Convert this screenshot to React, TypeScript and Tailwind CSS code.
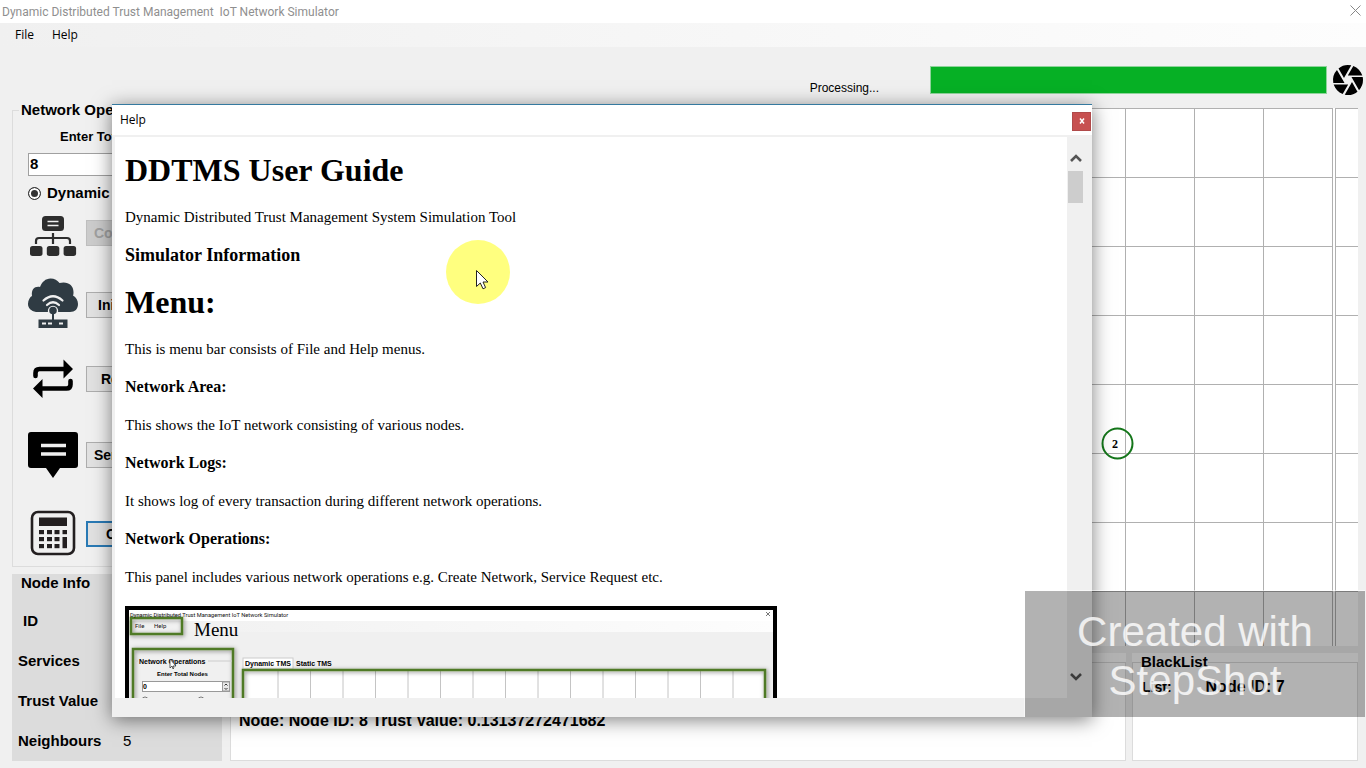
import React from "react";
import { MdCamera } from "react-icons/md";

const uiFont = "font-['Open_Sans','Noto_Sans',sans-serif]";

function NetworkIcon() {
  return (
    <svg width="50" height="50" viewBox="0 0 50 50" aria-hidden="true">
      <g fill="#2d2d2d">
        <rect x="14" y="8" width="22" height="15" rx="3.5" />
        <rect x="2" y="38" width="12.500" height="10" rx="2.500" />
        <rect x="18.800" y="38" width="12.500" height="10" rx="2.500" />
        <rect x="35.600" y="38" width="12.500" height="10" rx="2.500" />
      </g>
      <path d="M19.500 13.500h11M19.500 17.500h11" stroke="#f0f0f0" strokeWidth="1.500" />
      <path d="M8 36v-3q0-3 3-3h28q3 0 3 3v3M25 25v11" fill="none" stroke="#2d2d2d" strokeWidth="2.200" />
    </svg>
  );
}

function CloudIcon() {
  return (
    <svg width="50" height="50" viewBox="0 0 50 50" className="overflow-visible" aria-hidden="true">
      <path
        d="M8 32C3 31 0 28 0 24c0-4 2-7 4-8-1-7 3-10 8-9C14 2 17.500-1.500 22.500-1.500c4 0 7 2 9 4.500 8-2 14 2 14 9 0 1.500 0 2.500-.5 3.500C48 17 50 20.500 50 24c0 5-3 8-8 8Z"
        fill="#2f3b43"
      />
      <g fill="none" stroke="#f0f0f0" strokeWidth="2.200" strokeLinecap="round">
        <path d="M15.500 20.500Q25 12 34.500 20.500" />
        <path d="M19 25Q25 19.500 31 25" />
      </g>
      <circle cx="25" cy="31" r="5.200" fill="#f0f0f0" />
      <circle cx="25" cy="30.500" r="3.800" fill="#2f3b43" />
      <path d="M25 32v9" stroke="#2f3b43" strokeWidth="2" />
      <rect x="10.500" y="39.500" width="29" height="8.500" fill="#2f3b43" />
      <path d="M14 43.500h4M20 43.500h4M31 43.500h4" stroke="#f0f0f0" strokeWidth="2" />
    </svg>
  );
}

function RepeatIcon() {
  return (
    <svg width="50" height="50" viewBox="0 0 50 50" aria-hidden="true">
      <g fill="none" stroke="#000" strokeWidth="4.600" strokeLinecap="round">
        <path d="M7.500 22v-3q0-4 4-4H37" />
        <path d="M42.500 27v3.500q0 4-4 4H13" />
      </g>
      <path d="M35.500 5.500 45 15l-9.500 9.500ZM14.500 25 5 34.500l9.500 9.500Z" fill="#000" />
    </svg>
  );
}

function MessageIcon() {
  return (
    <svg width="50" height="50" viewBox="0 0 50 50" aria-hidden="true">
      <path d="M3 2h44q3 0 3 3v30q0 3-3 3H32l-7 10-7-10H3q-3 0-3-3V5q0-3 3-3Z" fill="#000" />
      <path d="M13 15.500h25M13 24h25" stroke="#f0f0f0" strokeWidth="3.600" />
    </svg>
  );
}

function CalculatorIcon() {
  return (
    <svg width="50" height="50" viewBox="0 0 50 50" aria-hidden="true">
      <rect x="4" y="3" width="42" height="42" rx="6" fill="none" stroke="#231f20" strokeWidth="2.600" />
      <g fill="#231f20">
        <rect x="11" y="8.500" width="28" height="8.500" />
        {[21, 28, 35].map((y) =>
          [11, 19, 26.5].map((x) => <rect key={`${x}-${y}`} x={x} y={y} width="5" height="4.200" />)
        )}
        <rect x="34.500" y="21" width="4.500" height="4.200" />
        <rect x="34.500" y="28" width="4.500" height="11.200" />
      </g>
    </svg>
  );
}

function Chevron({ up = false }: { up?: boolean }) {
  return (
    <svg width="12" height="10" viewBox="0 0 12 10" aria-hidden="true">
      <path d={up ? "M1 8 6 3l5 5" : "M1 2l5 5 5-5"} fill="none" stroke="#555" strokeWidth="2.600" />
    </svg>
  );
}

const plainButton = "border border-[#adadad] bg-[#e1e1e1]";

const operations = [
  { icon: <NetworkIcon />, label: "Configure", disabled: true, look: "border border-[#bfbfbf] bg-[#cccccc] pl-[7px] text-[#a0a0a0]" },
  { icon: <CloudIcon />, label: "Initialize", look: `${plainButton} pl-[11px]` },
  { icon: <RepeatIcon />, label: "Reset", look: `${plainButton} pl-[14px]` },
  { icon: <MessageIcon />, label: "Send", look: `${plainButton} pl-[7px]` },
  { icon: <CalculatorIcon />, label: "Calculate", look: "border-2 border-[#2a7ab5] bg-[#e1e1e1] pl-[18px]" },
];

function NetworkOperations() {
  return (
    <fieldset className="h-[465px] border border-[#dcdcdc]">
      <legend className="ml-[6px] px-[2px] text-[15px] leading-4 font-bold">Network Operations</legend>
      <div className="pt-[11px] pr-3 pl-[15px]">
        <label htmlFor="total" className="block pl-8 text-[13px] leading-4 font-bold">
          Enter Total Nodes
        </label>
        <input
          id="total"
          type="text"
          defaultValue="8"
          className="mt-2 block h-[23px] w-full border border-[#a0a0a0] bg-white px-[1px] pb-[3px] text-[15px] font-bold"
        />
        <label className="mt-2 flex h-[18px] items-center gap-[6px] text-[15px] font-bold">
          <input
            type="radio"
            name="mode"
            defaultChecked
            className="h-[13px] w-[13px] appearance-none rounded-full border border-[#333] bg-[#333] shadow-[inset_0_0_0_2px_#fff]"
          />
          Dynamic
        </label>
        <div className="mt-[6px] grid grid-rows-[72px_74px_76px_79px_50px]">
          {operations.map((op) => (
            <div key={op.label} className="flex h-[50px] items-center gap-2">
              {op.icon}
              <button
                type="button"
                disabled={op.disabled}
                className={`h-[26px] flex-1 text-left text-[14px] font-bold ${op.look}`}
              >
                {op.label}
              </button>
            </div>
          ))}
        </div>
      </div>
    </fieldset>
  );
}

const nodeInfo = [
  ["ID", ""],
  ["Services", ""],
  ["Trust Value", ""],
  ["Neighbours", "5"],
];

function NodeInfo() {
  return (
    <section className="mt-[7px] flex-1 bg-[#dcdcdc] text-[15px]">
      <h2 className="pl-[9px] leading-[18px] font-bold">Node Info</h2>
      <dl className="mt-[9px] pl-[6px]">
        {nodeInfo.map(([name, value]) => (
          <div key={name} className="grid h-10 grid-cols-[105px_1fr] items-center">
            <dt className={name === "ID" ? "pl-[5px] font-bold" : "font-bold"}>{name}</dt>
            <dd>{value}</dd>
          </div>
        ))}
      </dl>
    </section>
  );
}

function NetworkArea() {
  const lines =
    "bg-[linear-gradient(to_left,#b0b0b0_1px,transparent_1px),linear-gradient(to_bottom,#b0b0b0_1px,transparent_1px)] bg-[size:69px_69px]";
  return (
    <div className="flex flex-1 gap-[2px] bg-white">
      <div className={`relative flex-1 bg-right-top ${lines}`}>
        <svg className="absolute top-[318px] right-[199px]" width="34" height="34" viewBox="0 0 34 34">
          <circle cx="17.500" cy="17.500" r="15" fill="none" stroke="#14761a" strokeWidth="2" />
          <text x="12" y="22" fontFamily="Liberation Serif, serif" fontSize="12" fontWeight="bold">
            2
          </text>
        </svg>
      </div>
      <div className="w-[23px] border-l border-[#b0b0b0] bg-[linear-gradient(to_bottom,#b0b0b0_1px,transparent_1px)] bg-[size:69px_69px]" />
    </div>
  );
}

function GuidePicture() {
  const columns = Array.from({ length: 15 }, (_, i) => 153 + i * 32.5);
  return (
    <svg className="block shrink-0" width="652" height="420" viewBox="0 0 652 420" role="img" aria-label="Simulator window">
      <defs>
        <linearGradient id="bar">
          <stop offset="0" stopColor="#f0f0f0" />
          <stop offset="1" stopColor="#fdfdfd" />
        </linearGradient>
        <filter id="soft" x="-20%" y="-20%" width="140%" height="140%">
          <feDropShadow dx="1" dy="1" stdDeviation="2" floodColor="#000" floodOpacity="0.5" />
        </filter>
      </defs>
      <rect width="652" height="420" fill="#000" />
      <rect x="4" y="4" width="644" height="412" fill="#f0f0f0" />
      <rect x="4" y="4" width="644" height="11" fill="#fff" />
      <rect x="4" y="15" width="644" height="11" fill="url(#bar)" />
      <path d="M641 6l4 4M645 6l-4 4" stroke="#777" />
      <rect x="118" y="64" width="523" height="340" fill="#fff" />
      <path d={columns.map((x) => `M${x} 65v339`).join("")} stroke="#c4c4c4" />
      <rect x="118" y="52" width="50" height="11" fill="#fff" stroke="#ccc" />
      <g fill="none" stroke="#507a28" strokeWidth="2.500" filter="url(#soft)">
        <rect x="6" y="12" width="51" height="16" />
        <rect x="8" y="43" width="100" height="360" />
        <rect x="118" y="64" width="522" height="339" />
      </g>
      <path d="M10 55h3M83 55h24" stroke="#ccc" />
      <rect x="17.500" y="75.500" width="87" height="10" fill="#fff" stroke="#999" />
      <rect x="97.500" y="76" width="7" height="9" fill="#e8e8e8" stroke="#999" />
      <path d="M99.500 79.500 101 78l1.500 1.500M99.500 82l1.500 1.500 1.500-1.500" fill="none" stroke="#333" />
      <circle cx="20" cy="94" r="3" fill="#fff" stroke="#777" />
      <circle cx="76" cy="94" r="3" fill="#fff" stroke="#777" />
      <g fontFamily="Roboto, sans-serif" fontSize="6" fill="#111">
        <text x="5" y="11" fontSize="5.700">Dynamic Distributed Trust Management  IoT Network Simulator</text>
        <text x="10" y="22">File</text>
        <text x="29" y="22">Help</text>
      </g>
      <g fontFamily="Liberation Sans, sans-serif" fontSize="7" fontWeight="bold">
        <text x="14" y="58">Network Operations</text>
        <text x="32" y="70" fontSize="6">Enter Total Nodes</text>
        <text x="18" y="83">0</text>
        <text x="26" y="97">Dynamic</text>
        <text x="82" y="97">Static</text>
        <text x="120" y="60">Dynamic TMS</text>
        <text x="171" y="60">Static TMS</text>
      </g>
      <text x="69" y="30" fontFamily="Liberation Serif, serif" fontSize="19">Menu</text>
      <path d="M45 53v9l2-2 1 3 1-1-1-2h3Z" fill="#fff" stroke="#222" strokeWidth="0.700" />
    </svg>
  );
}

function HelpDialog() {
  return (
    <div
      role="dialog"
      aria-label="Help"
      className="absolute top-[104px] right-[274px] bottom-[51px] left-[112px] flex flex-col border-t border-[#35799f] bg-[#f0f0f0] shadow-[0_3px_18px_rgba(0,0,0,0.5)]"
    >
      <div className="flex h-[30px] shrink-0 items-center justify-between bg-white pr-[1px] pl-2">
        <span className={`text-[12px] ${uiFont}`}>Help</span>
        <button type="button" aria-label="Close help" className="mt-[2px] flex h-[19px] w-[19px] items-center justify-center border border-[#b04a4a] bg-[#c75050]">
          <svg width="6" height="6" viewBox="0 0 6 6" aria-hidden="true">
            <path d="M1 .5l4 5M5 .5l-4 5" stroke="#fff" strokeWidth="1.500" />
          </svg>
        </button>
      </div>
      <div className="mt-[2px] mb-[19px] ml-[3px] flex min-h-0 flex-1">
        <article className="relative flex min-w-0 flex-1 flex-col gap-5 overflow-hidden bg-white pt-[15px] pl-[10px] font-['Liberation_Serif',serif] text-[15px] leading-[18px]">
          <h1 className="text-[32px] leading-9 font-bold">DDTMS User Guide</h1>
          <p>Dynamic Distributed Trust Management System Simulation Tool</p>
          <h3 className="text-[18px] font-bold">Simulator Information</h3>
          <h1 className="text-[32px] leading-9 font-bold">Menu:</h1>
          <p>This is menu bar consists of File and Help menus.</p>
          <h4 className="text-[16px] font-bold">Network Area:</h4>
          <p>This shows the IoT network consisting of various nodes.</p>
          <h4 className="text-[16px] font-bold">Network Logs:</h4>
          <p>It shows log of every transaction during different network operations.</p>
          <h4 className="text-[16px] font-bold">Network Operations:</h4>
          <p>This panel includes various network operations e.g. Create Network, Service Request etc.</p>
          <GuidePicture />
          <svg className="absolute top-[103px] left-[331px]" width="64" height="64" viewBox="0 0 64 64" aria-hidden="true">
            <circle cx="32" cy="32" r="32" fill="#ffff00" fillOpacity="0.5" />
            <path d="M30.500 30.500v16l3.800-3.500 2.700 5.800 2.600-1.200-2.600-5.600h5Z" fill="#fff" stroke="#222" />
          </svg>
        </article>
        <div className="flex w-[25px] flex-col items-start pt-4 pb-4">
          <button type="button" aria-label="Scroll up" className="ml-[3px] pb-2">
            <Chevron up />
          </button>
          <div className="ml-[1px] h-8 w-[15px] bg-[#cdcdcd]" />
          <button type="button" aria-label="Scroll down" className="mt-auto ml-[3px]">
            <Chevron />
          </button>
        </div>
      </div>
    </div>
  );
}

export default function App() {
  return (
    <div className="relative flex min-h-screen flex-col overflow-hidden bg-[#f0f0f0] font-['Liberation_Sans',Arial,sans-serif] text-black">
      <header className="flex h-[23px] items-center justify-between bg-white pr-[5px] pl-[2px] font-['Roboto','Noto_Sans',sans-serif] text-[12px] whitespace-pre text-[#8f8f8f]">
        <span>{"Dynamic Distributed Trust Management  IoT Network Simulator"}</span>
        <button type="button" aria-label="Close">
          <svg width="11" height="11" viewBox="0 0 11 11" className="mb-[3px]" aria-hidden="true">
            <path d="M.5.5l10 10M10.500.5l-10 10" stroke="#888" />
          </svg>
        </button>
      </header>
      <nav className={`flex h-6 items-center gap-[18px] bg-linear-to-r from-[#f0f0f0] to-[#fdfdfd] pl-[15px] text-[12px] ${uiFont}`}>
        <button type="button">File</button>
        <button type="button">Help</button>
      </nav>
      <div className="flex h-[55px] items-start justify-end pt-[18px] pr-[2px]">
        <label htmlFor="progress" className="mt-[15px] mr-[51px] text-[12px] leading-4">
          Processing...
        </label>
        <progress
          id="progress"
          value={100}
          max={100}
          className="mt-[1px] mr-[5px] h-7 w-[397px] appearance-none border border-[#8fd49b] bg-[#06b025] [&::-webkit-progress-bar]:bg-[#06b025] [&::-webkit-progress-value]:bg-[#06b025]"
        />
        <button type="button" aria-label="Capture" className="flex h-[30px] w-8 items-center justify-center">
          <MdCamera className="h-9 w-9 shrink-0" />
        </button>
      </div>
      <main className="flex flex-1 gap-2 pr-2 pb-[7px] pl-3">
        <div className="flex w-[210px] shrink-0 flex-col">
          <NetworkOperations />
          <NodeInfo />
        </div>
        <div className="flex min-w-0 flex-1 flex-col pt-[6px]">
          <NetworkArea />
          <div className="mt-[7px] flex h-[108px] gap-[6px]">
            <div className="min-w-0 flex-1 bg-white">
              <fieldset className="h-full border border-[#dcdcdc]">
                <legend className="ml-2 text-[15px] leading-[18px] font-bold">Network Logs</legend>
                <p className="mt-[41px] pl-2 text-[16px] leading-[18px] font-bold">Node: Node ID: 8 Trust Value: 0.13137272471682</p>
              </fieldset>
            </div>
            <div className="w-[226px] shrink-0 bg-white">
              <fieldset className="h-full border border-[#dcdcdc]">
                <legend className="ml-2 text-[15px] leading-[18px] font-bold">BlackList</legend>
                <div className="mt-[7px] flex gap-[34px] pl-[9px] text-[14px] leading-[18px] font-bold">
                  <span>List:</span>
                  <span className="text-[16px]">Node ID: 7</span>
                </div>
              </fieldset>
            </div>
          </div>
        </div>
      </main>
      <HelpDialog />
      <div className="absolute right-[1px] bottom-[51px] flex h-[127px] w-[341px] items-center justify-center border-t border-l border-white/50 bg-black/30 bg-clip-padding pt-[3px] text-center text-[42px] leading-[49px] text-white/80">
        <p>
          Created with
          <br />
          StepShot
        </p>
      </div>
    </div>
  );
}
